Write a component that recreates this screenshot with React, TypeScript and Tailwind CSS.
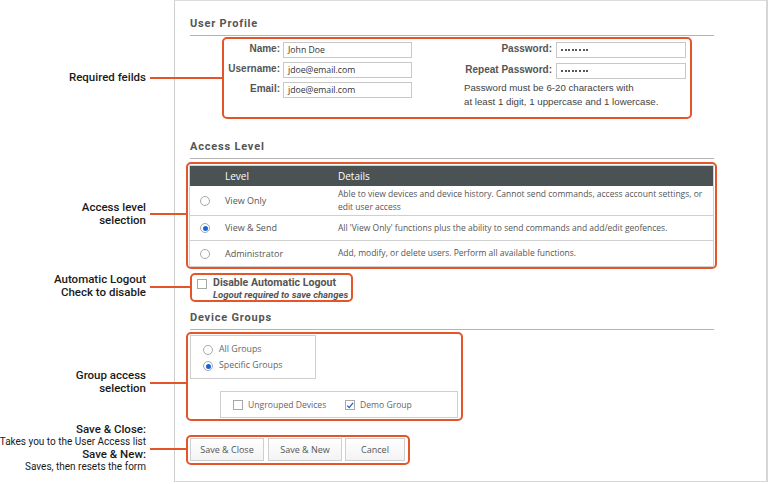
import React from "react";

const OR = "border-[#e5552a]";

function Radio({ checked }: { checked?: boolean }) {
  return (
    <span className="w-[10px] h-[10px] shrink-0 rounded-full border border-[#a8a8a8] bg-white flex items-center justify-center">
      {checked && <span className="w-[5px] h-[5px] rounded-full bg-[#1565d8]" />}
    </span>
  );
}

function Check({ checked }: { checked?: boolean }) {
  return (
    <span className="w-[10px] h-[10px] shrink-0 border border-[#a8a8a8] bg-white flex items-center justify-center">
      {checked && (
        <svg width="9" height="9" viewBox="0 0 10 10">
          <path d="M1.5 5.2 L4 7.6 L8.8 1.8" fill="none" stroke="#1e5fc0" strokeWidth="1.6" />
        </svg>
      )}
    </span>
  );
}

function Heading({ children, mt }: { children: React.ReactNode; mt: string }) {
  return (
    <>
      <div
        className={`${mt} h-[14px] leading-[14px] text-[11px] font-bold tracking-[0.8px] text-[#555]`}
        style={{ fontFamily: "Roboto, sans-serif" }}
      >
        {children}
      </div>
      <div className="mt-[4px] h-px w-[524px] bg-[#b4b4b4]" />
    </>
  );
}

const seg = { fontFamily: "'Open Sans', sans-serif" };
const arial = { fontFamily: "'Liberation Sans', Arial, sans-serif" };
const roboto = { fontFamily: "Roboto, sans-serif" };

function Input({ value, w }: { value: string; w: string }) {
  return (
    <div
      className={`${w} h-[16px] border border-[#c8c8c8] bg-white pl-[4px] text-[8.7px] leading-[14px] text-[#333] whitespace-nowrap`}
      style={seg}
    >
      {value}
    </div>
  );
}

function Dots({ w }: { w: string }) {
  return (
    <div className={`${w} h-[16px] border border-[#c8c8c8] bg-white pl-[4px] flex items-center gap-[1.6px]`}>
      {Array.from({ length: 8 }).map((_, i) => (
        <span key={i} className="w-[2px] h-[2px] rounded-full bg-[#222]" />
      ))}
    </div>
  );
}

function Callout({
  top,
  lineTop,
  lineW,
  children,
}: {
  top: string;
  lineTop: string;
  lineW: string;
  children: React.ReactNode;
}) {
  return (
    <>
      <div className={`absolute ${top} right-[623px] text-right text-[#1a1a1a] whitespace-nowrap`} style={roboto}>
        {children}
      </div>
      <div className={`absolute left-[150px] ${lineTop} ${lineW} h-[2px] bg-[#e5552a]`} />
    </>
  );
}

const B = "text-[11.5px] leading-[13px] font-medium";
const S = "text-[10px] leading-[12px]";

export default function App() {
  return (
    <div className="relative w-[769px] h-[484px] bg-white flex overflow-hidden">
      <div className="w-[174px] shrink-0" />
      <div className="w-[594px] h-[482px] border-l border-t border-r-2 border-b border-l-[#cfcfcf] border-t-[#dcdcdc] border-r-[#d6d6d6] border-b-[#d6d6d6] pl-[15px] flex flex-col">
        <Heading mt="mt-[16px]">User Profile</Heading>

        {/* Required fields */}
        <div className={`mt-[1px] ml-[32px] w-[470px] h-[82px] border-2 ${OR} rounded-[5px] pt-[3px] flex`}>
          <div className="w-[188px] flex flex-col gap-[4px]">
            {[
              ["Name:", "John Doe"],
              ["Username:", "jdoe@email.com"],
              ["Email:", "jdoe@email.com"],
            ].map(([l, v]) => (
              <div key={l} className="flex items-start gap-[3px]">
                <div className="w-[56px] text-right text-[10px] font-bold text-[#555] leading-[14px]" style={arial}>
                  {l}
                </div>
                <Input value={v} w="w-[129px]" />
              </div>
            ))}
          </div>
          <div className="ml-[52px] flex flex-col">
            <div className="flex items-start gap-[4px]">
              <div className="w-[88px] text-right text-[10px] font-bold text-[#555] leading-[14px]" style={arial}>
                Password:
              </div>
              <Dots w="w-[130px]" />
            </div>
            <div className="mt-[5px] flex items-start gap-[4px]">
              <div className="w-[88px] text-right text-[10px] font-bold text-[#555] leading-[14px]" style={arial}>
                Repeat Password:
              </div>
              <Dots w="w-[130px]" />
            </div>
            <div className="mt-[2px] text-[9.7px] leading-[14px] text-[#444] whitespace-nowrap" style={arial}>
              Password must be 6-20 characters with
              <br />
              at least 1 digit, 1 uppercase and 1 lowercase.
            </div>
          </div>
        </div>

        <Heading mt="mt-[21px]">Access Level</Heading>

        {/* Access level table */}
        <div className={`mt-[3px] -ml-[4px] w-[531px] h-[107px] border-2 ${OR} rounded-[5px] p-px`}>
          <div className="border border-[#d0d0d0]" style={seg}>
            <div className="h-[20px] bg-[#4b5254] flex items-center text-white text-[10px]">
              <div className="w-[28px]" />
              <div className="w-[113px] pl-[7px]">Level</div>
              <div className="pl-[7px]">Details</div>
            </div>
            {[
              {
                h: "h-[30px]",
                name: "View Only",
                det: (
                  <>
                    Able to view devices and device history. Cannot send commands, access account settings, or
                    <br />
                    edit user access
                  </>
                ),
              },
              {
                h: "h-[25px]",
                name: "View & Send",
                det: "All 'View Only' functions plus the ability to send commands and add/edit geofences.",
                checked: true,
              },
              {
                h: "h-[25px]",
                name: "Administrator",
                det: "Add, modify, or delete users. Perform all available functions.",
                last: true,
              },
            ].map((r) => (
              <div
                key={r.name}
                className={`${r.h} flex items-center text-[8.5px] text-[#555] ${r.last ? "" : "border-b border-[#d0d0d0]"}`}
              >
                <div className="w-[28px] flex justify-center pl-[2px]">
                  <Radio checked={r.checked} />
                </div>
                <div className="w-[113px] pl-[7px] text-[9px]">{r.name}</div>
                <div className="pl-[7px] leading-[12.5px] whitespace-nowrap">{r.det}</div>
              </div>
            ))}
          </div>
        </div>

        {/* Automatic logout */}
        <div className={`mt-[4px] w-[163px] h-[29px] border-2 ${OR} rounded-[5px] flex pl-[5px] pt-[2px]`} style={roboto}>
          <div className="pt-[2px]">
            <Check />
          </div>
          <div className="ml-[6px] text-[#555]">
            <div className="text-[10.6px] font-bold leading-[12px]">Disable Automatic Logout</div>
            <div className="text-[9.5px] font-bold italic leading-[12px]">Logout required to save changes</div>
          </div>
        </div>

        <Heading mt="mt-[9px]">Device Groups</Heading>

        {/* Device groups */}
        <div className={`mt-[2px] -ml-[4px] w-[277px] h-[89px] border-2 ${OR} rounded-[5px] pl-[2px] pt-px`} style={seg}>
          <div className="w-[126px] h-[44px] border border-[#cfcfcf] pl-[12px] pt-[6px] text-[8.8px] text-[#666]">
            <div className="h-[16px] flex items-center gap-[6px]">
              <Radio />
              All Groups
            </div>
            <div className="h-[16px] flex items-center gap-[6px]">
              <Radio checked />
              Specific Groups
            </div>
          </div>
          <div className="mt-[12px] ml-[30px] w-[238px] h-[27px] border border-[#cfcfcf] pl-[12px] pt-[2px] flex items-center text-[8.6px] text-[#666]">
            <div className="w-[112px] flex items-center gap-[5px]">
              <Check />
              Ungrouped Devices
            </div>
            <div className="flex items-center gap-[5px]">
              <Check checked />
              Demo Group
            </div>
          </div>
        </div>

        {/* Buttons */}
        <div className={`mt-[14px] -ml-[4px] w-[224px] h-[30px] border-2 ${OR} rounded-[5px] pl-[2px] pt-px flex`} style={seg}>
          {[
            ["Save & Close", "w-[74px]", "ml-0"],
            ["Save & New", "w-[74px]", "ml-[4px]"],
            ["Cancel", "w-[60px]", "ml-[3px]"],
          ].map(([t, w, m]) => (
            <div
              key={t}
              className={`${w} ${m} h-[23px] border border-[#cfcfcf] bg-gradient-to-b from-white to-[#f3f3f3] flex items-center justify-center text-[9px] text-[#555]`}
            >
              {t}
            </div>
          ))}
        </div>
      </div>

      {/* Callouts */}
      <Callout top="top-[71px]" lineTop="top-[77px]" lineW="w-[72px]">
        <div className={B}>Required feilds</div>
      </Callout>
      <Callout top="top-[201px]" lineTop="top-[213px]" lineW="w-[36px]">
        <div className={B}>Access level</div>
        <div className={B}>selection</div>
      </Callout>
      <Callout top="top-[273px]" lineTop="top-[286px]" lineW="w-[40px]">
        <div className={B}>Automatic Logout</div>
        <div className={B}>Check to disable</div>
      </Callout>
      <Callout top="top-[369px]" lineTop="top-[382px]" lineW="w-[36px]">
        <div className={B}>Group access</div>
        <div className={B}>selection</div>
      </Callout>
      <Callout top="top-[423px]" lineTop="top-[448px]" lineW="w-[36px]">
        <div className={B}>Save &amp; Close:</div>
        <div className={S}>Takes you to the User Access list</div>
        <div className={B}>Save &amp; New:</div>
        <div className={S}>Saves, then resets the form</div>
      </Callout>
    </div>
  );
}
